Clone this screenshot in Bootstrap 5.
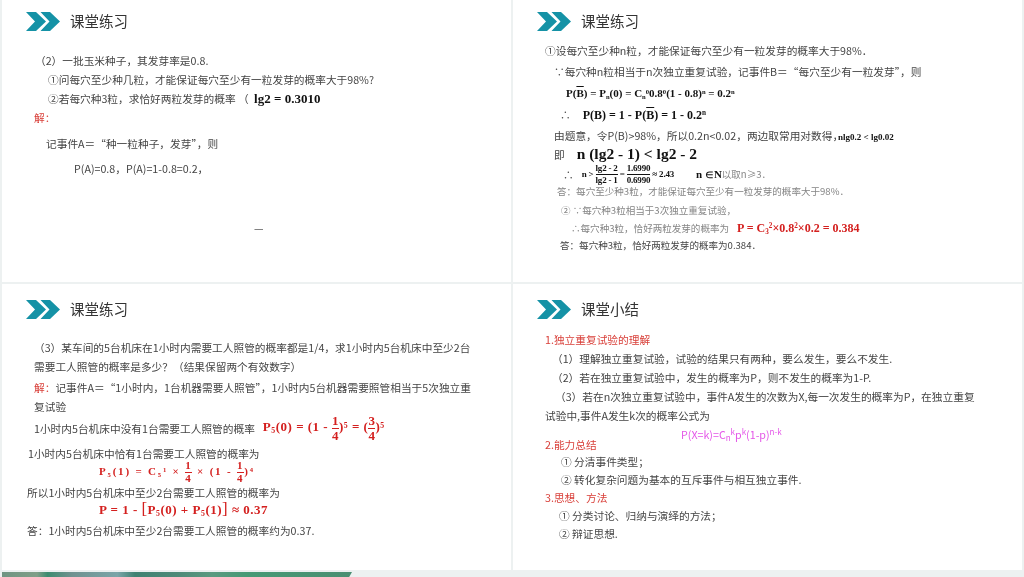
<!DOCTYPE html>
<html lang="zh">
<head>
<meta charset="utf-8">
<title>课堂练习</title>
<link href="https://cdn.jsdelivr.net/npm/bootstrap@5.3.0/dist/css/bootstrap.min.css" rel="stylesheet">
<style>
html,body{height:100%;overflow:hidden}
body{background:#edf1f1;font-family:"Noto Sans CJK SC","Liberation Sans",sans-serif;font-size:10.7px;color:#444;font-weight:400}
.deck{display:grid;grid-template-columns:509px 509px;grid-template-rows:282px 286px;gap:2px;padding-left:2px;height:570px}
.sld{background:#fff;overflow:hidden}
.sld>*{filter:blur(.3px)}
.hd{height:50px;padding-left:24px;gap:10px}
.hd-top{height:42px}
.hd-a{height:41px;padding-top:0;align-items:flex-start!important}
.hd-a .ttl,.hd-s .ttl{line-height:42px}
.hd-a svg{margin-top:12px}
.hd-s{height:46px;align-items:flex-start!important}
.hd-s .ttl{line-height:50px}
.hd-s svg{margin-top:16px}
.ttl{font-size:14.5px;color:#333}
.ln{height:19px;white-space:nowrap;line-height:19px}
.h11{height:11px}
.h13{height:13px;line-height:13px}.h15{height:15px;line-height:15px}.h16{height:16px;line-height:16px}
.h18{height:18px;line-height:18px}.h17{height:17px;line-height:17px}.h21{height:21px;line-height:21px}.h23{height:23px;line-height:23px}
.red{color:#d9403a}
.mag{color:#e455e8}
.gry{color:#858585}
.sm{font-size:9.55px}
.fm{font-family:"Liberation Serif",serif;font-weight:700;color:#111;line-height:1}
.fm-r{color:#d4201f}
.fm sub,.fm sup{font-size:.6em}
.ob{text-decoration:overline}
.fr{display:inline-flex;flex-direction:column;align-items:center;vertical-align:middle;line-height:1.05}
.fr>span:first-child{border-bottom:1px solid currentColor}
.fr-t{line-height:1.25}
.brk{font-size:1.3em;font-weight:400;line-height:0}
.sp1{letter-spacing:.5px}.sp2{letter-spacing:1.8px}.sp3{letter-spacing:.5px}.sp0{letter-spacing:-.2px}
.band{height:5px;width:350px;margin:2px 0 0 2px;background:linear-gradient(90deg,#6f9482 0,#7f9f88 10%,#3c8c70 13%,#6f9290 20%,#7aa5a8 33%,#3f8272 38%,#4d8a78 50%,#5a9a80 60%,#459a75 70%,#4a8f72 100%);clip-path:polygon(0 0,100% 0,99.2% 100%,0 100%)}
.f9{font-size:9px}.f10{font-size:9.5px}.f11{font-size:11px}.f12{font-size:12px}.f13{font-size:13px}.f15{font-size:15.5px}
.t1{margin-top:1px}.t2{margin-top:2px}.t3{margin-top:3px}.t4{margin-top:4px}.t6{margin-top:6px}.t7{margin-top:7px}.t9{margin-top:9px}.t41{margin-top:41px}
.i25{padding-left:25px}.i26{padding-left:26px}.i32{padding-left:32px}.i33{padding-left:33px}.i39{padding-left:39px}.i41{padding-left:41px}.i42{padding-left:42px}.i44{padding-left:44px}.i46{padding-left:46px}.i47{padding-left:47px}.i48{padding-left:48px}.i50{padding-left:50px}.i53{padding-left:53px}.i58{padding-left:58px}.i72{padding-left:72px}.i97{padding-left:97px}.i168{padding-left:168px}.i252{padding-left:252px}
.s3{margin-left:3px}.s8{margin-left:8px}.s12{margin-left:12px}.s22{margin-left:22px}.sn{margin-left:-5px}
</style>
</head>
<body>
<div class="deck">
  <section class="sld">
    <div class="hd hd-top d-flex align-items-center"><svg width="34" height="19" viewBox="0 0 34 19"><path fill="#1592a6" d="M0 0h10l10 9.500-10 9.500H0l9-9.500z"/><path fill="#1592a6" d="M14.500 0h9.500l10 9.500-10 9.500h-9.500l9-9.500z"/></svg><span class="ttl">课堂练习</span></div>
    <div class="ln t9 i33">（2）一批玉米种子，其发芽率是0.8.</div>
    <div class="ln i46">①问每穴至少种几粒，才能保证每穴至少有一粒发芽的概率大于98%?</div>
    <div class="ln i46">②若每穴种3粒，求恰好两粒发芽的概率 （ <span class="fm f13 s3">lg2 = 0.3010</span></div>
    <div class="ln i32 red">解：</div>
    <div class="ln t7 i44">记事件A＝“种一粒种子，发芽”，则</div>
    <div class="ln t6 i72">P(A)=0.8，P(A)=1-0.8=0.2，</div>
    <div class="ln t41 i252">—</div>
  </section>
  <section class="sld">
    <div class="hd hd-a d-flex"><svg width="34" height="19" viewBox="0 0 34 19"><path fill="#1592a6" d="M0 0h10l10 9.500-10 9.500H0l9-9.500z"/><path fill="#1592a6" d="M14.500 0h9.500l10 9.500-10 9.500h-9.500l9-9.500z"/></svg><span class="ttl">课堂练习</span></div>
    <div class="ln i32">①设每穴至少种n粒，才能保证每穴至少有一粒发芽的概率大于98%．</div>
    <div class="ln t2 i41">∵每穴种n粒相当于n次独立重复试验，记事件B＝“每穴至少有一粒发芽”，则</div>
    <div class="ln t2 i53"><span class="fm f11">P(<span class="ob">B</span>) = P<sub>n</sub>(0) = C<sub>n</sub><sup>0</sup>0.8<sup>0</sup>(1 - 0.8)<sup>n</sup> = 0.2<sup>n</sup></span></div>
    <div class="ln t3 i47">∴<span class="fm f12 s12">P(B) = 1 - P(<span class="ob">B</span>) = 1 - 0.2<sup>n</sup></span></div>
    <div class="ln t2 i41">由题意，令P(B)&gt;98%，所以0.2n&lt;0.02，两边取常用对数得，<span class="fm f9 sn">nlg0.2 &lt; lg0.02</span></div>
    <div class="ln i41">即<span class="fm f15 s12">n (lg2 - 1) &lt; lg2 - 2</span></div>
    <div class="ln t1 i50 d-flex align-items-center">∴<span class="fm f9 s8 sp0">n &gt; <span class="fr fr-t"><span>lg2 - 2</span><span>lg2 - 1</span></span> = <span class="fr fr-t"><span>1.6990</span><span>0.6990</span></span> ≈ 2.43</span><span class="fm f11 s22">n ∈N</span><span class="gry f10">以取n≥3．</span></div>
    <div class="ln h15 i44 gry sm">答：每穴至少种3粒，才能保证每穴至少有一粒发芽的概率大于98%．</div>
    <div class="ln h23 i48 gry sm">② ∵每穴种3粒相当于3次独立重复试验，</div>
    <div class="ln h13 i58 gry sm">∴每穴种3粒，恰好两粒发芽的概率为<span class="fm fm-r f12 s8">P = C<sub>3</sub><sup>2</sup>×0.8<sup>2</sup>×0.2 = 0.384</span></div>
    <div class="ln h21 i47 sm">答：每穴种3粒，恰好两粒发芽的概率为0.384．</div>
  </section>
  <section class="sld">
    <div class="hd d-flex align-items-center"><svg width="34" height="19" viewBox="0 0 34 19"><path fill="#1592a6" d="M0 0h10l10 9.500-10 9.500H0l9-9.500z"/><path fill="#1592a6" d="M14.500 0h9.500l10 9.500-10 9.500h-9.500l9-9.500z"/></svg><span class="ttl">课堂练习</span></div>
    <div class="ln t4 i32">（3）某车间的5台机床在1小时内需要工人照管的概率都是1/4，求1小时内5台机床中至少2台</div>
    <div class="ln i32">需要工人照管的概率是多少？（结果保留两个有效数字）</div>
    <div class="ln t2 i32"><span class="red">解：</span>记事件A＝“1小时内，1台机器需要人照管”，1小时内5台机器需要照管相当于5次独立重</div>
    <div class="ln i32">复试验</div>
    <div class="ln t3 i32 d-flex align-items-center">1小时内5台机床中没有1台需要工人照管的概率<span class="fm fm-r f13 s8 sp1">P<sub>5</sub>(0) = (1 - <span class="fr"><span>1</span><span>4</span></span>)<sup>5</sup> = (<span class="fr"><span>3</span><span>4</span></span>)<sup>5</sup></span></div>
    <div class="ln t6 i26">1小时内5台机床中恰有1台需要工人照管的概率为</div>
    <div class="ln i97 d-flex align-items-center"><span class="fm fm-r f11 sp2">P<sub>5</sub>(1) = C<sub>5</sub><sup>1</sup> × <span class="fr"><span>1</span><span>4</span></span> × (1 - <span class="fr"><span>1</span><span>4</span></span>)<sup>4</sup></span></div>
    <div class="ln t1 i25">所以1小时内5台机床中至少2台需要工人照管的概率为</div>
    <div class="ln h16 i97"><span class="fm fm-r f13 sp3">P = 1 - <span class="brk">[</span>P<sub>5</sub>(0) + P<sub>5</sub>(1)<span class="brk">]</span> ≈ 0.37</span></div>
    <div class="ln t3 i25">答：1小时内5台机床中至少2台需要工人照管的概率约为0.37.</div>
  </section>
  <section class="sld">
    <div class="hd hd-s d-flex"><svg width="34" height="19" viewBox="0 0 34 19"><path fill="#1592a6" d="M0 0h10l10 9.500-10 9.500H0l9-9.500z"/><path fill="#1592a6" d="M14.500 0h9.500l10 9.500-10 9.500h-9.500l9-9.500z"/></svg><span class="ttl">课堂小结</span></div>
    <div class="ln i32 red">1.独立重复试验的理解</div>
    <div class="ln i39">（1）理解独立重复试验，试验的结果只有两种，要么发生，要么不发生.</div>
    <div class="ln i39">（2）若在独立重复试验中，发生的概率为P，则不发生的概率为1-P.</div>
    <div class="ln i42">（3）若在n次独立重复试验中，事件A发生的次数为X,每一次发生的概率为P，在独立重复</div>
    <div class="ln i32">试验中,事件A发生k次的概率公式为</div>
    <div class="ln h11 i168 mag">P(X=k)=C<sub>n</sub><sup>k</sup>p<sup>k</sup>(1-p)<sup>n-k</sup></div>
    <div class="ln h17 i32 red">2.能力总结</div>
    <div class="ln h18 i48">① 分清事件类型；</div>
    <div class="ln h18 i48">② 转化复杂问题为基本的互斥事件与相互独立事件.</div>
    <div class="ln h18 i32 red">3.思想、方法</div>
    <div class="ln h18 i46">① 分类讨论、归纳与演绎的方法；</div>
    <div class="ln h18 i46">② 辩证思想.</div>
  </section>
</div>
<div class="band"></div>
<script src="https://cdn.jsdelivr.net/npm/bootstrap@5.3.0/dist/js/bootstrap.bundle.min.js"></script>
</body>
</html>
